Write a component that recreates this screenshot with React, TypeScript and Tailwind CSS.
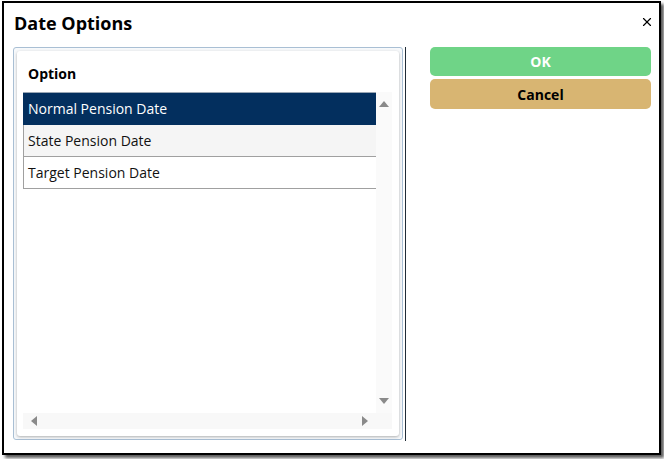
import { X } from "lucide-react";

const rows = ["Normal Pension Date", "State Pension Date", "Target Pension Date"];

function Arrow({ dir }: { dir: "up" | "down" | "left" | "right" }) {
  const pts = {
    up: "0,6 5,0 10,6",
    down: "0,0 10,0 5,6",
    left: "6,0 6,10 0,5",
    right: "0,0 0,10 6,5",
  }[dir];
  const vertical = dir === "up" || dir === "down";
  return (
    <svg
      width={vertical ? 10 : 6}
      height={vertical ? 6 : 10}
      viewBox={vertical ? "0 0 10 6" : "0 0 6 10"}
    >
      <polygon points={pts} fill="#8a8a8a" />
    </svg>
  );
}

export default function App() {
  const selected = 0;

  return (
    <div
      className="w-[664px] h-[459px] bg-white overflow-hidden pl-[2px] pt-[1px]"
      style={{ fontFamily: '"Open Sans", "Noto Sans", sans-serif' }}
    >
      <div className="relative w-[659px] h-[454px] border-2 border-black bg-white shadow-[3px_3px_3px_rgba(0,0,0,0.65)]">
        {/* title */}
        <div className="pl-[10px] pt-[8px] h-[32px] text-[18px] leading-[24px] font-bold text-black">
          Date Options
        </div>
        <button
          type="button"
          aria-label="Close"
          className="absolute right-[5px] top-[12px] text-black"
        >
          <X size={14} strokeWidth={2} />
        </button>

        {/* body */}
        <div className="flex mt-[12px] pl-[9px]">
          <div className="w-[390px] h-[393px] border border-[#a9bfd4] rounded-[3px] bg-[#f7f9fb] p-[3px]">
            <div className="h-[385px] bg-white rounded-[3px] shadow-[0_1px_3px_rgba(0,0,0,0.3)] px-[6px]">
              <div className="pt-[13px] pl-[5px] h-[41px] text-[14px] leading-[20px] font-bold text-black">
                Option
              </div>
              <div className="flex flex-col w-[369px] h-[337px]">
                <div className="flex flex-1">
                  <div className="w-[353px] border-t border-[#9aa7b5]">
                    {rows.map((r, i) => (
                      <div
                        key={r}
                        className={`h-[32px] flex items-center pl-[4px] border-l border-b text-[14px] ${
                          i === selected
                            ? "bg-[#032f5e] text-white border-[#032f5e]"
                            : i % 2 === 1
                              ? "bg-[#f5f5f5] text-[#111] border-[#a0a0a0]"
                              : "bg-white text-[#111] border-[#a0a0a0]"
                        }`}
                      >
                        {r}
                      </div>
                    ))}
                  </div>
                  <div className="w-[16px] bg-[#fafafa] flex flex-col items-center justify-between pt-[9px] pb-[9px]">
                    <Arrow dir="up" />
                    <Arrow dir="down" />
                  </div>
                </div>
                <div className="h-[16px] bg-[#f8f8f8] flex items-center justify-between pl-[8px] pr-[24px]">
                  <Arrow dir="left" />
                  <Arrow dir="right" />
                </div>
              </div>
            </div>
          </div>

          <div className="ml-[2px] w-px h-[394px] bg-[#1f2b36]" />

          <div className="ml-[24px] w-[221px] flex flex-col gap-[3px]">
            <button
              type="button"
              className="h-[29px] rounded-[5px] bg-[#6fd487] text-white text-[14px] font-bold"
            >
              OK
            </button>
            <button
              type="button"
              className="h-[30px] rounded-[5px] bg-[#d8b572] text-black text-[14px] font-bold"
            >
              Cancel
            </button>
          </div>
        </div>
      </div>
    </div>
  );
}
